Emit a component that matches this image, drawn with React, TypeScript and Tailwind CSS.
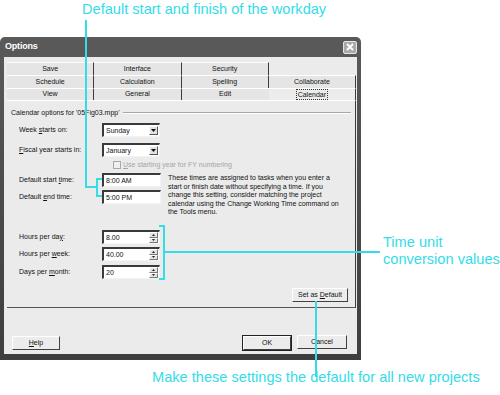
import type { ReactNode } from 'react';

const CYAN = '#34dce8';

function Field({ children, className = '' }: { children: ReactNode; className?: string }) {
  return (
    <div
      className={`flex h-[14px] items-stretch border-t-2 border-l-2 border-[#3a3a3a] border-r border-b border-r-[#f4f4f4] border-b-[#f4f4f4] bg-white ${className}`}
    >
      {children}
    </div>
  );
}

function Select({ value }: { value: string }) {
  return (
    <Field className="w-[58px]">
      <span className="flex-1 pl-[2px] leading-[11px]">{value}</span>
      <span className="my-[1px] mr-[1px] flex w-[9px] items-center justify-center border border-t-white border-l-white border-r-[#555] border-b-[#555] bg-[#e2e2e2]">
        <svg width="5" height="3" viewBox="0 0 5 3">
          <path d="M0 0H5L2.5 3Z" fill="#111" />
        </svg>
      </span>
    </Field>
  );
}

function Spin({ value }: { value: string }) {
  return (
    <Field className="w-[58px]">
      <span className="flex-1 pl-[2px] leading-[11px]">{value}</span>
      <span className="mr-[1px] flex w-[9px] flex-col">
        <span className="flex flex-1 items-center justify-center border border-t-white border-l-white border-r-[#777] border-b-[#777] bg-[#e4e4e4]">
          <svg width="3" height="2" viewBox="0 0 3 2">
            <path d="M0 2H3L1.5 0Z" fill="#222" />
          </svg>
        </span>
        <span className="flex flex-1 items-center justify-center border border-t-white border-l-white border-r-[#777] border-b-[#777] bg-[#e4e4e4]">
          <svg width="3" height="2" viewBox="0 0 3 2">
            <path d="M0 0H3L1.5 2Z" fill="#222" />
          </svg>
        </span>
      </span>
    </Field>
  );
}

function Row({ label, children, className = '' }: { label: ReactNode; children: ReactNode; className?: string }) {
  return (
    <div className={`flex h-[14px] items-center ${className}`}>
      <span className="w-[83px]">{label}</span>
      {children}
    </div>
  );
}

function Btn({ children, className = '' }: { children: ReactNode; className?: string }) {
  return (
    <div
      className={`flex h-[14px] items-center justify-center border border-t-white border-l-white border-r-[#404040] border-b-[#404040] bg-[#ececec] ${className}`}
    >
      {children}
    </div>
  );
}

const tabRows: { name: string; line: boolean; selected?: boolean }[][] = [
  [
    { name: 'Save', line: true },
    { name: 'Interface', line: true },
    { name: 'Security', line: true },
  ],
  [
    { name: 'Schedule', line: true },
    { name: 'Calculation', line: true },
    { name: 'Spelling', line: true },
    { name: 'Collaborate', line: true },
  ],
  [
    { name: 'View', line: true },
    { name: 'General', line: true },
    { name: 'Edit', line: false },
    { name: 'Calendar', line: true, selected: true },
  ],
];

function OptionsDialog() {
  return (
    <div className="flex h-[323px] w-[361px] flex-col rounded-t-[5px] bg-gradient-to-b from-[#5a5a5a] to-[#3e3e3e] px-[4px] pb-[6px]">
      <div className="flex h-[20px] items-center justify-between">
        <span className="pl-[1px] text-[9px] font-bold tracking-[-0.2px] text-white">Options</span>
        <span className="flex h-[13px] w-[14px] items-center justify-center rounded-[2px] border border-[#e6e6e6] bg-[#a9a9a9]">
          <svg width="8" height="8" viewBox="0 0 8 8">
            <path d="M1 1L7 7M7 1L1 7" stroke="#fff" strokeWidth="1.8" />
          </svg>
        </span>
      </div>

      <div className="flex flex-1 flex-col bg-[#ebebeb] pt-[5px] pr-[1px] pl-[3px] text-[7px] text-[#111]">
        {tabRows.map((row, i) => (
          <div key={i} className={`grid grid-cols-4 ${i === 2 ? 'h-[12px]' : 'h-[13px]'}`}>
            {row.map((t) => (
              <div
                key={t.name}
                className={`flex items-center justify-center border-t border-t-white ${
                  t.line ? 'border-r border-r-[#3c3c3c]' : ''
                } ${t.selected ? 'bg-[#ececec]' : 'bg-[#e5e5e5]'}`}
              >
                {t.selected ? (
                  <span className="border border-dotted border-[#333] px-[1px] leading-[9px]">{t.name}</span>
                ) : (
                  t.name
                )}
              </div>
            ))}
          </div>
        ))}

        <div className="flex h-[208px] shrink-0 flex-col border-t border-r border-b border-t-white border-r-[#3c3c3c] border-b-[#555] px-[4px] pt-[7px]">
          <div className="flex h-[10px] items-center gap-[3px]">
            <span>Calendar options for '05Fig03.mpp'</span>
            <span className="h-[2px] flex-1 border-t border-b border-t-[#a8a8a8] border-b-white" />
          </div>

          <div className="flex flex-col pl-[8px]">
            <Row
              label={
                <>
                  Week <u>s</u>tarts on:
                </>
              }
              className="mt-[5px]"
            >
              <Select value="Sunday" />
            </Row>
            <Row
              label={
                <>
                  <u>F</u>iscal year starts in:
                </>
              }
              className="mt-[6px]"
            >
              <Select value="January" />
            </Row>
            <div className="mt-[2px] flex h-[12px] items-center gap-[2px] pl-[94px] text-[#a5a5a5]">
              <span className="h-[8px] w-[8px] border border-[#a8a8a8] bg-[#efefef]" />
              <span>
                <u>U</u>se starting year for FY numbering
              </span>
            </div>

            <div className="mt-[2px] flex h-[31px] gap-[7px]">
              <div className="flex flex-col">
                <Row
                  label={
                    <>
                      Default start <u>t</u>ime:
                    </>
                  }
                >
                  <Field className="w-[59px]">
                    <span className="pl-[2px] leading-[11px]">8:00 AM</span>
                  </Field>
                </Row>
                <Row
                  label={
                    <>
                      Default <u>e</u>nd time:
                    </>
                  }
                  className="mt-[3px]"
                >
                  <Field className="w-[59px]">
                    <span className="pl-[2px] leading-[11px]">5:00 PM</span>
                  </Field>
                </Row>
              </div>
              <p className="pt-[1px] leading-[8.6px] whitespace-nowrap">
                These times are assigned to tasks when you enter a<br />
                start or finish date without specifying a time. If you<br />
                change this setting, consider matching the project<br />
                calendar using the Change Working Time command on<br />
                the Tools menu.
              </p>
            </div>

            <Row
              label={
                <>
                  Hours per da<u>y</u>:
                </>
              }
              className="mt-[26px]"
            >
              <Spin value="8.00" />
            </Row>
            <Row
              label={
                <>
                  Hours per <u>w</u>eek:
                </>
              }
              className="mt-[3px]"
            >
              <Spin value="40.00" />
            </Row>
            <Row
              label={
                <>
                  Days per <u>m</u>onth:
                </>
              }
              className="mt-[4px]"
            >
              <Spin value="20" />
            </Row>
          </div>

          <div className="mt-[9px] flex justify-end pr-[3px]">
            <Btn className="w-[56px]">
              <span>
                Set as <u>D</u>efault
              </span>
            </Btn>
          </div>
        </div>

        <div className="mt-[27px] flex items-center">
          <Btn className="ml-[5px] w-[48px]">
            <span>
              <u>H</u>elp
            </span>
          </Btn>
          <div className="ml-auto mr-[9px] flex gap-[5px]">
            <div className="border border-[#222]">
              <Btn className="h-[12px] w-[48px]">OK</Btn>
            </div>
            <Btn className="w-[50px]">Cancel</Btn>
          </div>
        </div>
      </div>
    </div>
  );
}

export default function App() {
  return (
    <div className="relative h-[395px] w-[500px] overflow-hidden bg-white font-['Liberation_Sans',Arial,sans-serif]">
      <div className="pt-[37px]">
        <OptionsDialog />
      </div>

      {/* callouts */}
      <svg className="pointer-events-none absolute inset-0" width="500" height="395" fill="none" stroke={CYAN} strokeWidth="2">
        <path d="M86 20V187H97" />
        <path d="M102 179H97V196H102" />
        <path d="M159 226H164V279H159" />
        <path d="M164 252H380" />
        <path d="M316 301V377" />
      </svg>
      <span className="absolute top-[2px] left-[82px] text-[14.6px] leading-none whitespace-nowrap text-[#34dce8]">
        Default start and finish of the workday
      </span>
      <span className="absolute top-[234px] left-[383px] text-[14.6px] leading-[17px] text-[#34dce8]">
        Time unit
        <br />
        conversion values
      </span>
      <span className="absolute top-[370px] left-[152px] text-[14.6px] leading-none whitespace-nowrap text-[#34dce8]">
        Make these settings the default for all new projects
      </span>
    </div>
  );
}
